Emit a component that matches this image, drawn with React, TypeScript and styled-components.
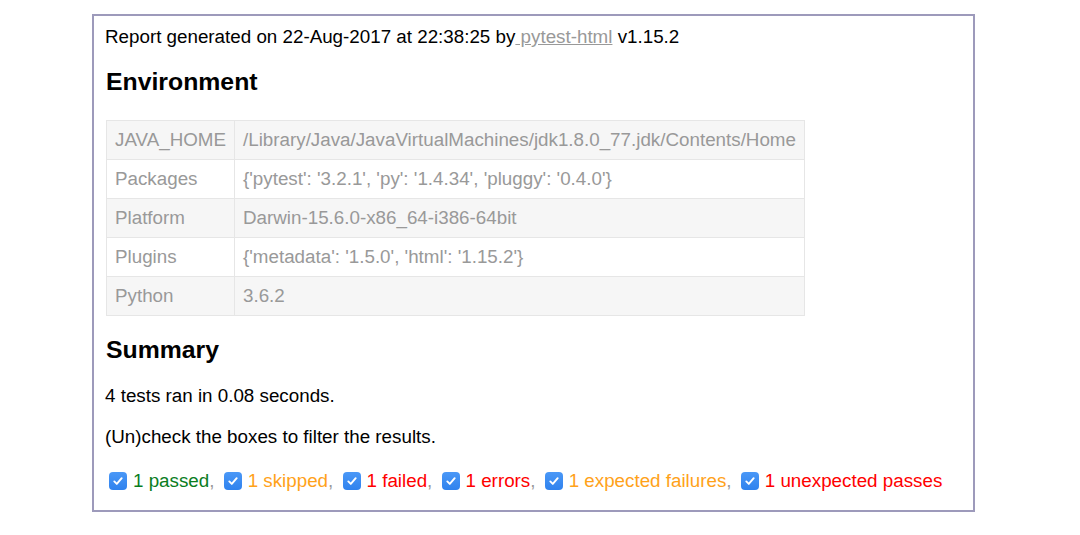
import React from "react";
import styled, { createGlobalStyle } from "styled-components";

const Global = createGlobalStyle`
  html, body { margin: 0; padding: 0; background: #ffffff; }
  body { font-family: "Liberation Sans", Arial, Helvetica, sans-serif; }
`;

const Frame = styled.div`
  box-sizing: border-box;
  margin: 14px 0 0 92px;
  width: 883px;
  height: 498px;
  border: 2px solid #9d9abb;
  padding: 10px 11px 0 11px;
  color: #000;
  font-size: 18.8px;
`;

const Para = styled.p<{ $gap?: number }>`
  margin: ${(p) => p.$gap ?? 0}px 0 0 0;
  line-height: 22px;
`;

const Link = styled.a`
  color: #999;
  text-decoration: underline;
`;

const Heading = styled.h2<{ $gap: number }>`
  margin: ${(p) => p.$gap}px 0 0 1px;
  font-size: 24.8px;
  line-height: 30px;
  font-weight: bold;
`;

const Table = styled.table`
  margin: 23px 0 0 1px;
  border-collapse: collapse;
  width: 699px;
  color: #999;
  font-size: 18.8px;
`;

const Row = styled.tr<{ $shade: boolean }>`
  background: ${(p) => (p.$shade ? "#f6f6f6" : "#ffffff")};
`;

const Cell = styled.td<{ $key?: boolean }>`
  border: 1px solid #e6e6e6;
  height: 39px;
  padding: 0 0 0 8px;
  box-sizing: border-box;
  width: ${(p) => (p.$key ? "128px" : "auto")};
  white-space: nowrap;
`;

const Filters = styled.div`
  margin-top: 22px;
  display: flex;
  align-items: center;
  line-height: 22px;
  color: #999;
  white-space: pre;
`;

const Filter = styled.span`
  display: inline-flex;
  align-items: center;
`;

const Box = styled.span`
  display: inline-flex;
  align-items: center;
  justify-content: center;
  width: 18px;
  height: 18px;
  border-radius: 4px;
  background: linear-gradient(#4a98f7, #2f82ee);
  margin: 0 6px 0 4px;
`;

const Label = styled.span<{ $color: string }>`
  color: ${(p) => p.$color};
`;

const env: [string, string][] = [
  ["JAVA_HOME", "/Library/Java/JavaVirtualMachines/jdk1.8.0_77.jdk/Contents/Home"],
  ["Packages", "{'pytest': '3.2.1', 'py': '1.4.34', 'pluggy': '0.4.0'}"],
  ["Platform", "Darwin-15.6.0-x86_64-i386-64bit"],
  ["Plugins", "{'metadata': '1.5.0', 'html': '1.15.2'}"],
  ["Python", "3.6.2"],
];

const filters: [string, string][] = [
  ["1 passed", "#0a7d1e"],
  ["1 skipped", "#ffa21a"],
  ["1 failed", "#ff0000"],
  ["1 errors", "#ff0000"],
  ["1 expected failures", "#ffa21a"],
  ["1 unexpected passes", "#ff0000"],
];

const Check = () => (
  <Box>
    <svg width="12" height="12" viewBox="0 0 12 12">
      <path d="M2.3 6.4 L4.8 8.9 L9.7 3.2" fill="none" stroke="#fff" strokeWidth="1.9" strokeLinecap="round" strokeLinejoin="round" />
    </svg>
  </Box>
);

export default function App() {
  return (
    <>
      <Global />
      <Frame>
        <Para>
          Report generated on 22-Aug-2017 at 22:38:25 by<Link href="#"> pytest-html</Link> v1.15.2
        </Para>
        <Heading $gap={19}>Environment</Heading>
        <Table>
          <tbody>
            {env.map(([k, v], i) => (
              <Row key={k} $shade={i % 2 === 0}>
                <Cell $key>{k}</Cell>
                <Cell>{v}</Cell>
              </Row>
            ))}
          </tbody>
        </Table>
        <Heading $gap={19}>Summary</Heading>
        <Para $gap={20}>4 tests ran in 0.08 seconds.</Para>
        <Para $gap={19}>(Un)check the boxes to filter the results.</Para>
        <Filters>
          {filters.map(([t, c], i) => (
            <Filter key={t}>
              <Check />
              <Label $color={c}>{t}</Label>
              {i < filters.length - 1 ? ", " : ""}
            </Filter>
          ))}
        </Filters>
      </Frame>
    </>
  );
}
